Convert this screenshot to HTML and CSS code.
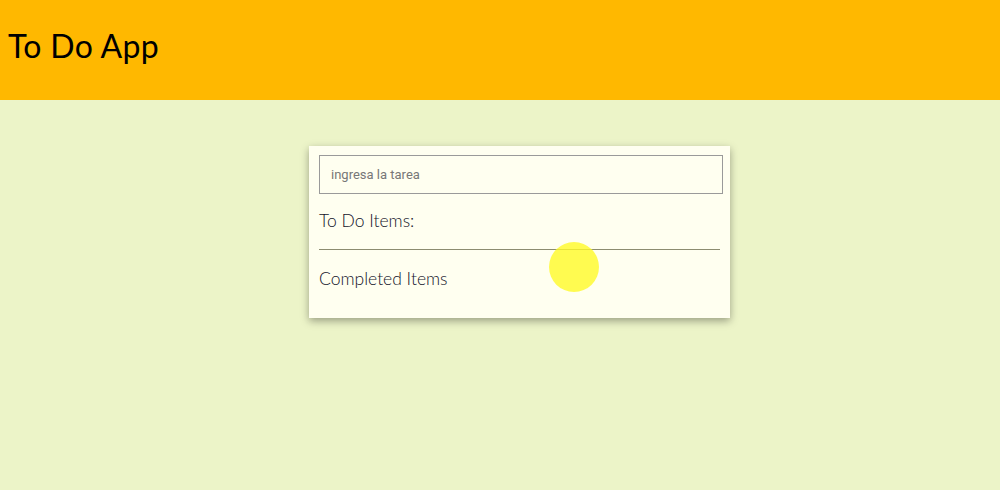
FILE: index.html
```html
<!DOCTYPE html>
<html>
<head>
<meta charset="utf-8">
<link rel="stylesheet" href="styles.css">
</head>
<body>
<div class="page">
  <header class="topbar"><h1 class="title">To Do App</h1></header>
  <main class="content">
    <section class="card">
      <input class="task-input" type="text" placeholder="ingresa la tarea">
      <h2 class="section-title todo">To Do Items:</h2>
      <hr class="divider">
      <h2 class="section-title done">Completed Items</h2>
      <span class="click-dot"></span>
    </section>
  </main>
</div>
</body>
</html>
```
FILE: styles.css
```css
html, body { margin: 0; padding: 0; background: #ffffff; }
.page {
  width: 1000px;
  height: 490px;
  background: #ecf4c8;
  font-family: "Lato", "Open Sans", sans-serif;
}
.topbar {
  height: 100px;
  background: #ffb800;
  display: flex;
  align-items: center;
  padding-left: 8px;
  padding-bottom: 10px;
  box-sizing: border-box;
}
.title {
  margin: 0;
  font-family: "Lato", sans-serif;
  font-weight: 400;
  font-size: 32px;
  color: #000;
  letter-spacing: 0.3px;
}
.content { padding-top: 46px; }
.card {
  position: relative;
  margin-left: 309px;
  width: 401px;
  padding: 9px 10px 29px 10px;
  background: #fffff0;
  box-shadow: 0 3px 8px rgba(0,0,0,0.35);
}
.task-input {
  display: block;
  width: 404px;
  height: 39px;
  box-sizing: border-box;
  border: 1px solid #9a9a9a;
  background: #fffff0;
  padding: 0 11px;
  font-family: "Roboto", "Liberation Sans", sans-serif;
  font-size: 13px;
  color: #333;
  outline: none;
}
.task-input::placeholder { color: #777; }
.section-title {
  margin: 0;
  font-family: "Lato", sans-serif;
  font-weight: 300;
  font-size: 17.5px;
  color: #14142a;
}
.todo { margin-top: 17px; line-height: 20px; }
.divider {
  margin: 18px 0 0 0;
  border: 0;
  border-top: 1px solid #8c8c70;
  height: 0;
}
.done { margin-top: 19px; line-height: 20px; }
.click-dot {
  position: absolute;
  left: 240px;
  top: 96px;
  width: 50px;
  height: 50px;
  border-radius: 50%;
  background: rgba(255, 250, 40, 0.8);
}
```
